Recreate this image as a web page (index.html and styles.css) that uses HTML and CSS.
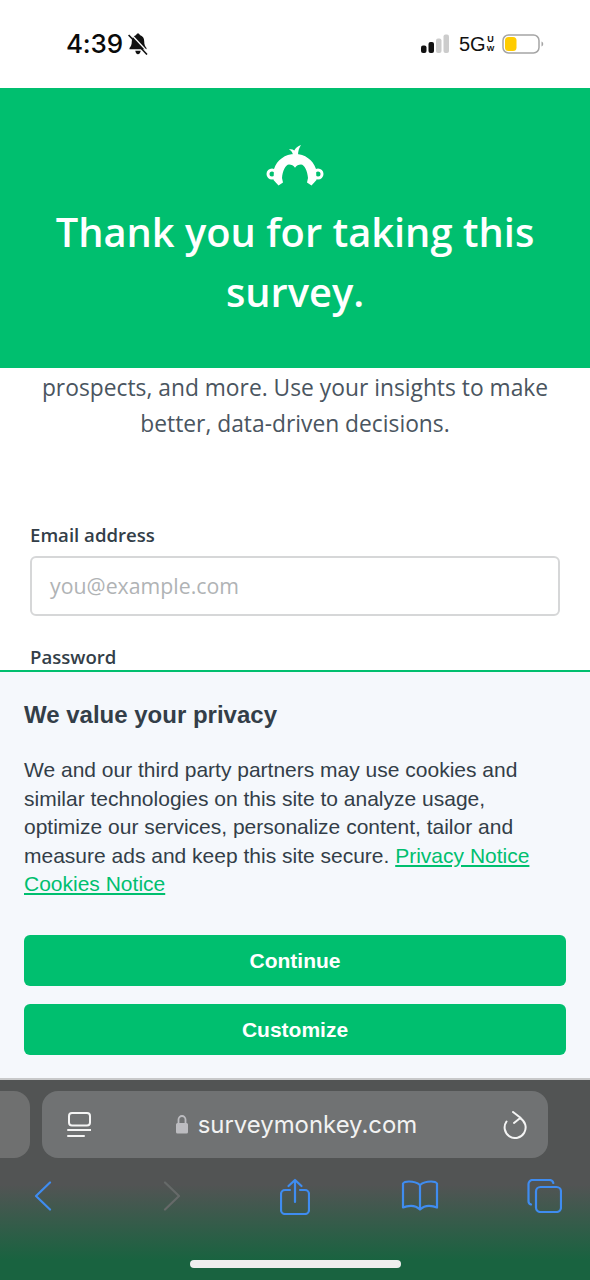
FILE: index.html
```html
<!DOCTYPE html>
<html lang="en">
<head>
<meta charset="utf-8">
<title>SurveyMonkey</title>
<link rel="stylesheet" href="styles.css">
</head>
<body>
<div class="screen">
  <div class="status">
    <div class="status-left">
      <span class="time">4:39</span>
      <svg class="bell" viewBox="0 0 20 22" width="20" height="22"><path class="bell-fill" d="M10 .5c1 0 1.700.7 1.800 1.600 2.900.8 4.400 3.200 4.400 6.100 0 3.500.8 5.200 2.300 6.700v1.300H1.500v-1.300c1.500-1.500 2.300-3.200 2.300-6.700 0-2.900 1.500-5.300 4.400-6.100C8.300 1.200 9 .5 10 .5z"/><path class="bell-fill" d="M7.300 17.800h5.400c-.2 1.900-1.300 3.400-2.700 3.400s-2.500-1.500-2.700-3.400z"/><path class="bell-gap" d="M2.400.6 21 20.400"/><path class="bell-slash" d="M.6 2 19 21.500"/></svg>
    </div>
    <div class="status-right">
      <svg class="signal" viewBox="0 0 28 20" width="28" height="20"><rect class="on" x="0" y="11.500" width="5.500" height="7.500" rx="2"/><rect class="on" x="7.500" y="8" width="5.500" height="11" rx="2"/><rect class="off" x="15" y="4.500" width="5.500" height="14.500" rx="2"/><rect class="off" x="22.500" y="0.500" width="5.500" height="18.500" rx="2"/></svg>
      <span class="net">5G<span class="uw"><span>U</span><span>W</span></span></span>
      <svg class="battery" viewBox="0 0 42 20" width="42" height="20"><rect class="bat-case" x="1" y="1" width="36" height="18" rx="5.500"/><rect class="bat-level" x="3" y="3" width="11.500" height="14" rx="3.500"/><path class="bat-tip" d="M39.500 7.500c1.300.4 1.700 1.400 1.700 2.500s-.4 2.100-1.700 2.500z"/></svg>
    </div>
  </div>

  <header class="hero">
    <svg class="logo" viewBox="0 0 58 42" width="58" height="42">
      <path class="logo-fill" d="M29 9C39 9 47 15 50 24L50.500 35 45.500 40.500 41 37.500 42 33C41.500 26 38.500 19.500 35 19.500 32.500 19.500 30.500 20.500 29 22.700 27.500 20.500 25.500 19.500 23 19.500 19.500 19.500 16.500 26 16 33L17 37.500 12.500 40.500 7.500 35 8 24C11 15 19 9 29 9Z"/>
      <path class="logo-fill" d="M27 10C26.500 7.500 25.500 5.800 23 4.500 25 4 26.800 4.500 28.300 5.600 29.500 3.200 31.800 1 35 0 33.200 2.800 32 6 32 10Z"/>
      <circle class="logo-ear" cx="6" cy="29" r="4"/>
      <circle class="logo-ear" cx="52" cy="29" r="4"/>
    </svg>
    <h1 class="hero-title">Thank you for taking this survey.</h1>
  </header>

  <main class="content">
    <p class="lead">prospects, and more. Use your insights to make better, data-driven decisions.</p>
    <form class="form">
      <label class="label">Email address</label>
      <div class="input">you@example.com</div>
      <label class="label label-pw">Password</label>
    </form>
  </main>

  <section class="consent">
    <h2 class="consent-title">We value your privacy</h2>
    <p class="consent-text">We and our third party partners may use cookies and similar technologies on this site to analyze usage, optimize our services, personalize content, tailor and measure ads and keep this site secure. <a class="link">Privacy Notice</a><br><a class="link">Cookies Notice</a></p>
    <div class="btn btn-first">Continue</div>
    <div class="btn">Customize</div>
  </section>

  <footer class="chrome">
    <div class="url-row">
      <div class="tab-peek"></div>
      <div class="url-bar">
        <svg class="reader" viewBox="0 0 24 28" width="24" height="28"><rect x="2" y="2" width="21" height="12.500" rx="3"/><path d="M1 19h23M1 25h16"/></svg>
        <div class="url-mid">
          <svg class="lock" viewBox="0 0 14 19" width="14" height="19"><path class="lock-body" d="M2.500 8h9A1.500 1.500 0 0 1 13 9.500v7.500a1.500 1.500 0 0 1-1.500 1.500h-9A1.500 1.500 0 0 1 1 17V9.500A1.500 1.500 0 0 1 2.500 8z"/><path class="lock-arc" d="M3.500 8.500V4.500a3.500 3.500 0 0 1 7 0V8.500"/></svg>
          <span class="url-text">surveymonkey.com</span>
        </div>
        <svg class="reload" viewBox="0 0 24 28" width="24" height="28"><path d="M17 7.200A10.500 10.500 0 1 1 3.500 10.500"/><path d="M10 1 17.500 6.800 11 12"/></svg>
      </div>
    </div>
    <nav class="toolbar">
      <svg class="tool" viewBox="0 0 18 30" width="18" height="30"><path d="M16 1.500 2 15l14 13.500"/></svg>
      <svg class="tool tool-off" viewBox="0 0 18 30" width="18" height="30"><path d="M2 1.500 16 15 2 28.500"/></svg>
      <svg class="tool" viewBox="0 0 30 37" width="30" height="37"><path d="M10 12H5a4 4 0 0 0-4 4v16a4 4 0 0 0 4 4h20a4 4 0 0 0 4-4V16a4 4 0 0 0-4-4h-5"/><path d="M15 24V2M8.500 8 15 2l6.500 6"/></svg>
      <svg class="tool" viewBox="0 0 38 32" width="38" height="32"><path d="M19 5C16 2.500 12 1.500 8 1.500 5.500 1.500 3 2 2 3.500v24c3-1.500 5-1.700 8-1.700 3.500 0 6.500 1.200 9 3.700 2.500-2.500 5.500-3.700 9-3.700 3 0 5 .2 8 1.700v-24C35 2 32.500 1.500 30 1.500 26 1.500 22 2.500 19 5z"/><path d="M19 5v24"/></svg>
      <svg class="tool" viewBox="0 0 35 34" width="35" height="34"><path d="M4 25.500a3.500 3.500 0 0 1-2.500-3.300V5a4 4 0 0 1 4-4h17a4 4 0 0 1 3.800 3"/><rect x="9" y="8" width="25" height="25" rx="4.500"/></svg>
    </nav>
    <div class="home-bar"></div>
  </footer>
</div>
</body>
</html>
```

FILE: styles.css
```css
* { box-sizing: border-box; }
html, body { margin: 0; padding: 0; }
body { background: #fff; }
.screen { width: 590px; height: 1280px; display: flex; flex-direction: column; overflow: hidden; font-family: "Open Sans", sans-serif; }

.status { height: 88px; flex: none; background: #fff; display: flex; justify-content: space-between; align-items: flex-start; padding: 29px 46px 0 66px; }
.status-left { display: flex; align-items: center; gap: 5px; }
.time { font: 500 26px/30px Inter, sans-serif; color: #0a0a0a; letter-spacing: -0.2px; }
.bell-fill { fill: #111; }
.bell-gap { stroke: #fff; stroke-width: 1.4; fill: none; }
.bell-slash { stroke: #111; stroke-width: 1.6; fill: none; }
.status-right { display: flex; align-items: center; gap: 10px; padding-top: 4px; }
.on { fill: #111; }
.off { fill: #ccc; }
.net { display: flex; align-items: center; font: 500 20px/22px "Liberation Sans", sans-serif; color: #111; width: 34px; }
.uw { display: flex; flex-direction: column; font-size: 9px; line-height: 9px; font-weight: 700; margin-left: 1px; align-items: center; }
.uw span:last-child { font-size: 8px; }
.battery { margin-left: -1px; }
.bat-case { fill: #fff; stroke: #a5a5a5; stroke-width: 1.500; }
.bat-level { fill: #ffcc00; }
.bat-tip { fill: #a5a5a5; }

.hero { height: 280px; flex: none; background: #00bf6f; color: #fff; display: flex; flex-direction: column; align-items: center; padding-top: 57px; }
.logo-fill { fill: #fff; }
.logo-ear { fill: none; stroke: #fff; stroke-width: 3; }
.hero-title { margin: 15px 0 0; width: 510px; text-align: center; font: 600 39.800px/60px "Open Sans", sans-serif; color: #fff; }

.content { flex: 1; min-height: 0; overflow: hidden; background: #fff; }
.lead { margin: 2px auto 0; width: 530px; text-align: center; font: 400 22.800px/36px "Open Sans", sans-serif; color: #4a5560; }
.form { padding: 0 30px; margin-top: 81px; }
.label { display: block; font: 600 18.600px/24px "Open Sans", sans-serif; color: #333e48; }
.input { height: 60px; margin-top: 9px; border: 2px solid #d6d7d8; border-radius: 6px; padding-left: 18px; font: 400 21.300px/56px "Open Sans", sans-serif; color: #b0b3b5; background: #fff; }
.label-pw { margin-top: 29px; }

.consent { height: 408px; flex: none; background: #f5f8fc; border-top: 2px solid #00bf6f; padding: 0 24px; font-family: "Liberation Sans", sans-serif; }
.consent-title { margin: 29px 0 0; font: 700 24px/28px "Liberation Sans", sans-serif; color: #333e48; }
.consent-text { margin: 27px 0 0; font: 400 21px/28.500px "Liberation Sans", sans-serif; color: #333e48; }
.link { color: #00bf6f; text-decoration: underline; }
.btn { height: 51px; border-radius: 6px; background: #00bf6f; color: #fff; text-align: center; font: 700 21px/51px "Liberation Sans", sans-serif; margin-top: 18px; }
.btn-first { margin-top: 36px; }

.chrome { height: 202px; flex: none; background: linear-gradient(to bottom, #525454 0, #525454 105px, #196340 180px, #196340 100%); border-top: 2px solid #c8c9ca; position: relative; }
.url-row { display: flex; gap: 12px; padding-top: 11px; height: 78px; margin-left: -60px; }
.tab-peek { width: 90px; height: 67px; border-radius: 16px; background: #6f7070; flex: none; }
.url-bar { width: 506px; height: 67px; border-radius: 16px; background: #707273; flex: none; display: flex; align-items: center; justify-content: space-between; padding: 0 21px 0 25px; }
.reader, .reload { fill: none; stroke: #f4f4f4; stroke-width: 2; stroke-linecap: round; stroke-linejoin: round; }
.url-mid { display: flex; align-items: center; gap: 9px; margin-left: 8px; margin-right: 10px; }
.lock-body { fill: #bcbcc0; }
.lock-arc { fill: none; stroke: #bcbcc0; stroke-width: 1.800; }
.url-text { font: 400 23.900px/30px Inter, sans-serif; color: #f2f2f2; }
.toolbar { display: grid; grid-template-columns: 86px 171px 76px 174px 75px; justify-items: center; align-items: center; height: 40px; margin-top: 18px; }
.tool { fill: none; stroke: #3f8cf0; stroke-width: 2.200; stroke-linecap: round; stroke-linejoin: round; }
.tool-off { stroke: #666a69; }
.home-bar { position: absolute; left: 190px; bottom: 12px; width: 211px; height: 8px; border-radius: 4px; background: #eee; }
```
